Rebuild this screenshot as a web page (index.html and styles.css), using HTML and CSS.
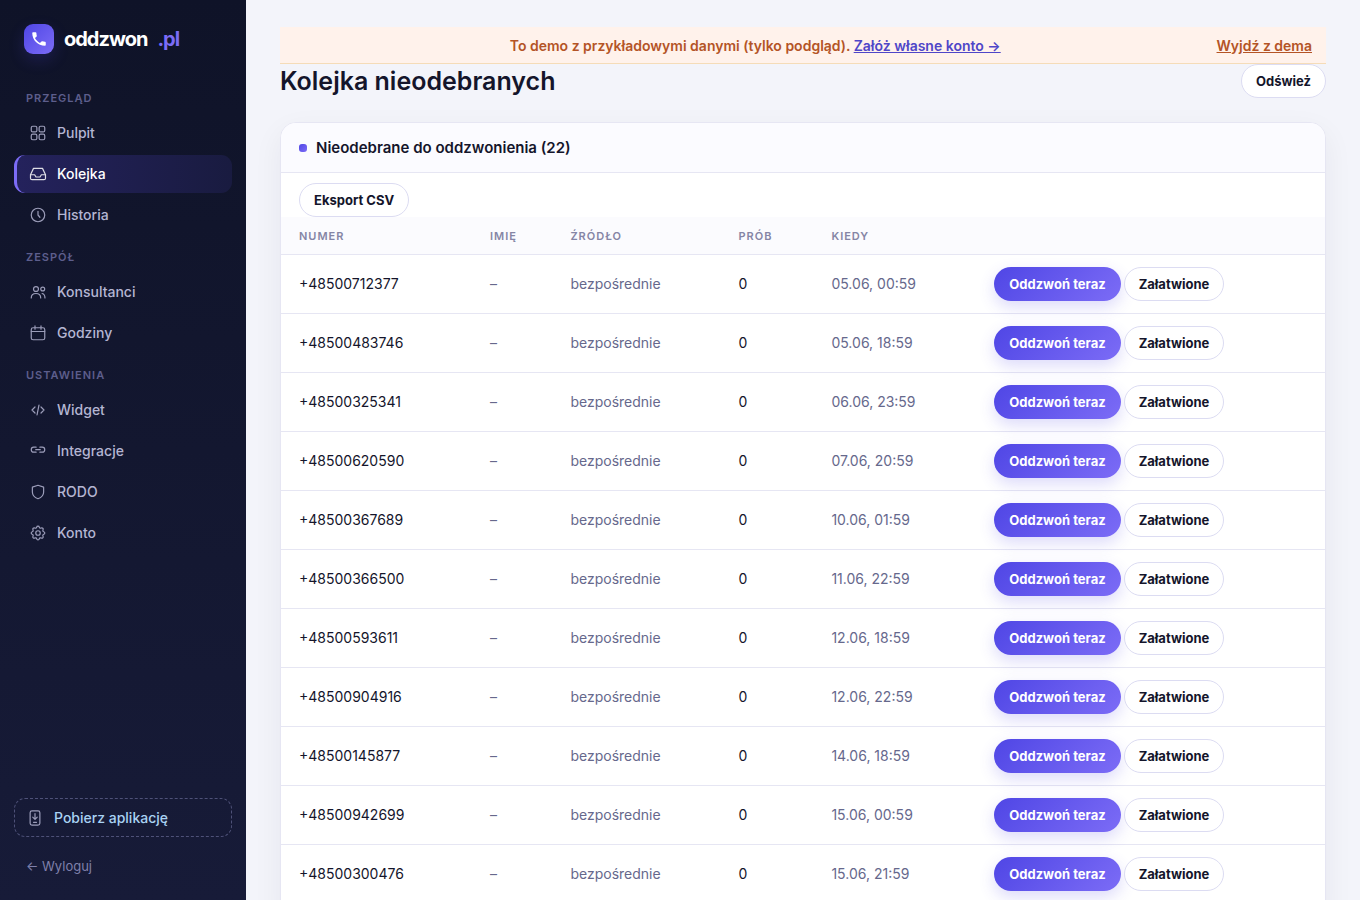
FILE: index.html
```html
<!DOCTYPE html>
<html lang="pl">
<head>
    <meta charset="utf-8">
    <meta name="viewport" content="width=device-width, initial-scale=1">
    <title>Kolejka nieodebranych – oddzwon.pl</title>
    <link rel="stylesheet" href="styles.css">
</head>
<body>
    <div class="app">
        <!-- Sidebar -->
        <aside class="sidebar">
            <a href="#" class="logo">
                <span class="logo-mark">
                    <svg viewBox="0 0 24 24" width="18" height="18" fill="currentColor"><path d="M6.62 10.79c1.44 2.83 3.76 5.14 6.59 6.59l2.2-2.2c.27-.27.67-.36 1.02-.24 1.12.37 2.33.57 3.57.57.55 0 1 .45 1 1V20c0 .55-.45 1-1 1-9.39 0-17-7.61-17-17 0-.55.45-1 1-1h3.5c.55 0 1 .45 1 1 0 1.25.2 2.45.57 3.57.11.35.03.74-.25 1.02l-2.2 2.2z"/></svg>
                </span>
                <span>oddzwon</span>
                <span class="logo-tld">.pl</span>
            </a>
            <nav class="nav">
                <div class="nav-label">Przegląd</div>
                <a href="#" class="nav-item">
                    <svg class="icon" viewBox="0 0 24 24"><rect x="3" y="3" width="7.5" height="7.5" rx="2"/><rect x="13.5" y="3" width="7.5" height="7.5" rx="2"/><rect x="3" y="13.5" width="7.5" height="7.5" rx="2"/><rect x="13.5" y="13.5" width="7.5" height="7.5" rx="2"/></svg>
                    Pulpit
                </a>
                <a href="#" class="nav-item active">
                    <svg class="icon" viewBox="0 0 24 24"><path d="M2 13h5.5l1.8 3h5.4l1.8-3H22"/><path d="M6 4.5h12L22 13v4.500a2 2 0 0 1-2 2H4a2 2 0 0 1-2-2V13z"/></svg>
                    Kolejka
                </a>
                <a href="#" class="nav-item">
                    <svg class="icon" viewBox="0 0 24 24"><circle cx="12" cy="12" r="9"/><path d="M12 7v5l2.500 3"/></svg>
                    Historia
                </a>
                <div class="nav-label">Zespół</div>
                <a href="#" class="nav-item">
                    <svg class="icon" viewBox="0 0 24 24"><circle cx="9.300" cy="8" r="3.300"/><path d="M3 20c0-3.600 2.700-6 6.300-6s6.300 2.400 6.300 6"/><circle cx="18.300" cy="8" r="2.600"/><path d="M17.500 14c2.300.5 3.800 2.600 3.800 6"/></svg>
                    Konsultanci
                </a>
                <a href="#" class="nav-item">
                    <svg class="icon" viewBox="0 0 24 24"><rect x="3" y="5" width="18" height="16" rx="2.500"/><path d="M3 10h18M8 2.500V7M16 2.500V7"/></svg>
                    Godziny
                </a>
                <div class="nav-label">Ustawienia</div>
                <a href="#" class="nav-item">
                    <svg class="icon" viewBox="0 0 24 24"><path d="M8 8l-4 4 4 4M16 8l4 4-4 4M13.300 5.500l-2.600 13"/></svg>
                    Widget
                </a>
                <a href="#" class="nav-item">
                    <svg class="icon" viewBox="0 0 24 24"><path d="M9.500 13.500H6.300a3.300 3.300 0 0 1 0-6.600h3.200M14.500 6.900h3.200a3.300 3.300 0 0 1 0 6.600h-3.200M9 10.200h6"/></svg>
                    Integracje
                </a>
                <a href="#" class="nav-item">
                    <svg class="icon" viewBox="0 0 24 24"><path d="M12 3l7.500 2.500V12c0 4.500-3 7.500-7.500 9-4.500-1.500-7.500-4.500-7.500-9V5.500z"/></svg>
                    RODO
                </a>
                <a href="#" class="nav-item">
                    <svg class="icon" viewBox="0 0 24 24"><circle cx="12" cy="12" r="3"/><path d="M10.300 4.300c.4-1.800 3-1.800 3.400 0a1.700 1.700 0 0 0 2.600 1.100c1.500-.9 3.300.8 2.400 2.400a1.700 1.700 0 0 0 1 2.500c1.800.4 1.800 3 0 3.400a1.700 1.700 0 0 0-1 2.600c.9 1.500-.9 3.300-2.400 2.400a1.700 1.700 0 0 0-2.600 1c-.4 1.800-3 1.800-3.400 0a1.700 1.700 0 0 0-2.600-1c-1.500.9-3.300-.9-2.400-2.400a1.700 1.700 0 0 0-1-2.600c-1.800-.4-1.800-3 0-3.400a1.700 1.700 0 0 0 1-2.500c-.9-1.600.9-3.300 2.400-2.400a1.700 1.700 0 0 0 2.600-1.100z"/></svg>
                    Konto
                </a>
            </nav>
            <a href="#" class="app-link">
                <svg class="icon" viewBox="0 0 24 24"><rect x="5.500" y="2.500" width="13" height="19" rx="2.500"/><path d="M12 6v7.500M9 10.800l3 3 3-3M10 17.800h4"/></svg>
                Pobierz aplikację
            </a>
            <a href="#" class="logout">← Wyloguj</a>
        </aside>

        <!-- Main content -->
        <main class="main">
            <div class="demo-bar">
                <p class="demo-text">To demo z przykładowymi danymi (tylko podgląd). <a href="#" class="demo-signup">Załóż własne konto →</a></p>
                <a href="#" class="demo-exit">Wyjdź z dema</a>
            </div>
            <header class="page-head">
                <h1>Kolejka nieodebranych</h1>
                <button type="button" class="btn">Odśwież</button>
            </header>
            <section class="card">
                <h2 class="card-head">Nieodebrane do oddzwonienia (22)</h2>
                <div class="card-tools">
                    <button type="button" class="btn">Eksport CSV</button>
                </div>
                <table class="queue">
                    <thead>
                        <tr>
                            <th class="col-number">Numer</th>
                            <th class="col-name">Imię</th>
                            <th class="col-source">Źródło</th>
                            <th class="col-tries">Prób</th>
                            <th class="col-when">Kiedy</th>
                            <th></th>
                        </tr>
                    </thead>
                    <tbody>
                        <tr>
                            <td>+48500712377</td>
                            <td class="muted">–</td>
                            <td class="muted">bezpośrednie</td>
                            <td>0</td>
                            <td class="muted">05.06, 00:59</td>
                            <td><div class="actions"><button type="button" class="btn btn-primary">Oddzwoń teraz</button><button type="button" class="btn">Załatwione</button></div></td>
                        </tr>
                        <tr>
                            <td>+48500483746</td>
                            <td class="muted">–</td>
                            <td class="muted">bezpośrednie</td>
                            <td>0</td>
                            <td class="muted">05.06, 18:59</td>
                            <td><div class="actions"><button type="button" class="btn btn-primary">Oddzwoń teraz</button><button type="button" class="btn">Załatwione</button></div></td>
                        </tr>
                        <tr>
                            <td>+48500325341</td>
                            <td class="muted">–</td>
                            <td class="muted">bezpośrednie</td>
                            <td>0</td>
                            <td class="muted">06.06, 23:59</td>
                            <td><div class="actions"><button type="button" class="btn btn-primary">Oddzwoń teraz</button><button type="button" class="btn">Załatwione</button></div></td>
                        </tr>
                        <tr>
                            <td>+48500620590</td>
                            <td class="muted">–</td>
                            <td class="muted">bezpośrednie</td>
                            <td>0</td>
                            <td class="muted">07.06, 20:59</td>
                            <td><div class="actions"><button type="button" class="btn btn-primary">Oddzwoń teraz</button><button type="button" class="btn">Załatwione</button></div></td>
                        </tr>
                        <tr>
                            <td>+48500367689</td>
                            <td class="muted">–</td>
                            <td class="muted">bezpośrednie</td>
                            <td>0</td>
                            <td class="muted">10.06, 01:59</td>
                            <td><div class="actions"><button type="button" class="btn btn-primary">Oddzwoń teraz</button><button type="button" class="btn">Załatwione</button></div></td>
                        </tr>
                        <tr>
                            <td>+48500366500</td>
                            <td class="muted">–</td>
                            <td class="muted">bezpośrednie</td>
                            <td>0</td>
                            <td class="muted">11.06, 22:59</td>
                            <td><div class="actions"><button type="button" class="btn btn-primary">Oddzwoń teraz</button><button type="button" class="btn">Załatwione</button></div></td>
                        </tr>
                        <tr>
                            <td>+48500593611</td>
                            <td class="muted">–</td>
                            <td class="muted">bezpośrednie</td>
                            <td>0</td>
                            <td class="muted">12.06, 18:59</td>
                            <td><div class="actions"><button type="button" class="btn btn-primary">Oddzwoń teraz</button><button type="button" class="btn">Załatwione</button></div></td>
                        </tr>
                        <tr>
                            <td>+48500904916</td>
                            <td class="muted">–</td>
                            <td class="muted">bezpośrednie</td>
                            <td>0</td>
                            <td class="muted">12.06, 22:59</td>
                            <td><div class="actions"><button type="button" class="btn btn-primary">Oddzwoń teraz</button><button type="button" class="btn">Załatwione</button></div></td>
                        </tr>
                        <tr>
                            <td>+48500145877</td>
                            <td class="muted">–</td>
                            <td class="muted">bezpośrednie</td>
                            <td>0</td>
                            <td class="muted">14.06, 18:59</td>
                            <td><div class="actions"><button type="button" class="btn btn-primary">Oddzwoń teraz</button><button type="button" class="btn">Załatwione</button></div></td>
                        </tr>
                        <tr>
                            <td>+48500942699</td>
                            <td class="muted">–</td>
                            <td class="muted">bezpośrednie</td>
                            <td>0</td>
                            <td class="muted">15.06, 00:59</td>
                            <td><div class="actions"><button type="button" class="btn btn-primary">Oddzwoń teraz</button><button type="button" class="btn">Załatwione</button></div></td>
                        </tr>
                        <tr>
                            <td>+48500300476</td>
                            <td class="muted">–</td>
                            <td class="muted">bezpośrednie</td>
                            <td>0</td>
                            <td class="muted">15.06, 21:59</td>
                            <td><div class="actions"><button type="button" class="btn btn-primary">Oddzwoń teraz</button><button type="button" class="btn">Załatwione</button></div></td>
                        </tr>
                    </tbody>
                </table>
            </section>
        </main>
    </div>
</body>
</html>
```
FILE: styles.css
```css
* {
    box-sizing: border-box;
}

body {
    margin: 0;
    background: #f3f4fa;
    color: #14152b;
    font-family: Inter, "Open Sans", sans-serif;
    font-size: 14px;
    line-height: 20px;
}

a {
    color: inherit;
}

.app {
    display: flex;
    align-items: flex-start;
}

/* Sidebar */
.sidebar {
    position: sticky;
    top: 0;
    display: flex;
    flex-direction: column;
    flex: 0 0 246px;
    height: 100vh;
    padding: 24px 14px;
    background: linear-gradient(180deg, #0f1328, #171b38);
    color: #b4b5d2;
}

.sidebar a {
    text-decoration: none;
}

.logo {
    display: flex;
    align-items: center;
    gap: 10px;
    margin-bottom: 24px;
    padding: 0 10px;
    color: #fff;
    font-size: 20px;
    font-weight: 700;
    letter-spacing: -1px;
}

.logo-mark {
    display: flex;
    align-items: center;
    justify-content: center;
    width: 30px;
    height: 30px;
    border-radius: 9px;
    background: linear-gradient(135deg, #4f46e5, #7c6cf6);
    box-shadow: 0 6px 16px rgba(79, 70, 229, 0.2);
}

.logo-tld {
    color: #7c6cf6;
}

.nav {
    display: flex;
    flex-direction: column;
    flex: 1;
    gap: 3px;
}

.nav-label {
    padding: 13px 12px 6px;
    color: #5d5e8c;
    font-size: 11px;
    font-weight: 600;
    line-height: 14px;
    letter-spacing: 1px;
    text-transform: uppercase;
}

.nav-item {
    display: flex;
    align-items: center;
    gap: 10px;
    height: 38px;
    padding: 0 12px;
    border-left: 3px solid transparent;
    border-radius: 11px;
    font-weight: 500;
}

.nav-item.active {
    border-left-color: #7c6cf6;
    background: linear-gradient(90deg, #24225c, #191b40);
    color: #fff;
}

.icon {
    width: 18px;
    height: 18px;
    flex: none;
    fill: none;
    stroke: currentColor;
    stroke-width: 1.6;
    stroke-linecap: round;
    stroke-linejoin: round;
    opacity: 0.85;
}

.app-link {
    display: flex;
    align-items: center;
    gap: 10px;
    padding: 9px 11px;
    border: 1px dashed #4e5178;
    border-radius: 11px;
    color: #a9d2f3;
    font-weight: 500;
    line-height: 19px;
}

.app-link .icon {
    color: #b4b5d2;
}

.logout {
    margin-top: 19px;
    padding: 0 12px;
    color: #7f80ab;
    font-size: 13px;
}

/* Main content */
.main {
    flex: 1;
    min-width: 0;
    padding: 27px 34px;
}

.demo-bar {
    display: flex;
    align-items: center;
    padding: 9px 14px 7px;
    border-bottom: 1px solid #f5dcb8;
    background: #fff2eb;
    color: #b45426;
    font-weight: 600;
}

.demo-text {
    flex: 1;
    margin: 0;
    text-align: center;
}

.demo-signup {
    color: #4f46c8;
}

.page-head {
    display: flex;
    align-items: center;
    justify-content: space-between;
    margin-bottom: 24px;
}

h1 {
    margin: 0;
    font-size: 25px;
    font-weight: 600;
    line-height: 34px;
}

/* Buttons */
.btn {
    height: 34px;
    padding: 0 14px;
    border: 1px solid #dcdcf2;
    border-radius: 17px;
    background: #fff;
    color: #14152b;
    font: inherit;
    font-size: 13px;
    font-weight: 700;
    cursor: pointer;
}

.btn-primary {
    border-color: transparent;
    background: linear-gradient(135deg, #4f46e5, #7c6cf6) border-box;
    color: #fff;
    box-shadow: 0 6px 16px rgba(79, 70, 229, 0.2);
}

/* Card with the queue */
.card {
    overflow: hidden;
    padding-bottom: 18px;
    border: 1px solid #e6e6f3;
    border-radius: 16px;
    background: #fff;
    box-shadow: 0 10px 30px rgba(20, 21, 43, 0.06);
}

.card-head {
    display: flex;
    align-items: center;
    gap: 9px;
    margin: 0;
    padding: 15px 18px 14px;
    border-bottom: 1px solid #e6e6f3;
    background: #fbfbff;
    font-size: 15px;
    font-weight: 600;
}

.card-head::before {
    content: "";
    width: 8px;
    height: 8px;
    border-radius: 3px;
    background: linear-gradient(135deg, #4f46e5, #7c6cf6);
}

.card-tools {
    padding: 10px 18px 0;
}

.card-tools .btn {
    display: block;
}

.queue {
    width: 100%;
    border-collapse: collapse;
    table-layout: fixed;
}

.queue th {
    padding: 12px 18px 10px;
    border-bottom: 1px solid #e6e6f3;
    background: #fbfbfe;
    color: #8585a5;
    font-size: 11px;
    font-weight: 600;
    line-height: 15px;
    letter-spacing: 1px;
    text-align: left;
    text-transform: uppercase;
}

.queue td {
    padding: 12px 18px;
    border-bottom: 1px solid #e6e6f3;
}

.queue .muted {
    color: #66688c;
}

.col-number {
    width: 18.3%;
}

.col-name {
    width: 7.7%;
}

.col-source {
    width: 16.1%;
}

.col-tries {
    width: 8.9%;
}

.col-when {
    width: 15.6%;
}

.actions {
    display: flex;
    gap: 3px;
}
```
